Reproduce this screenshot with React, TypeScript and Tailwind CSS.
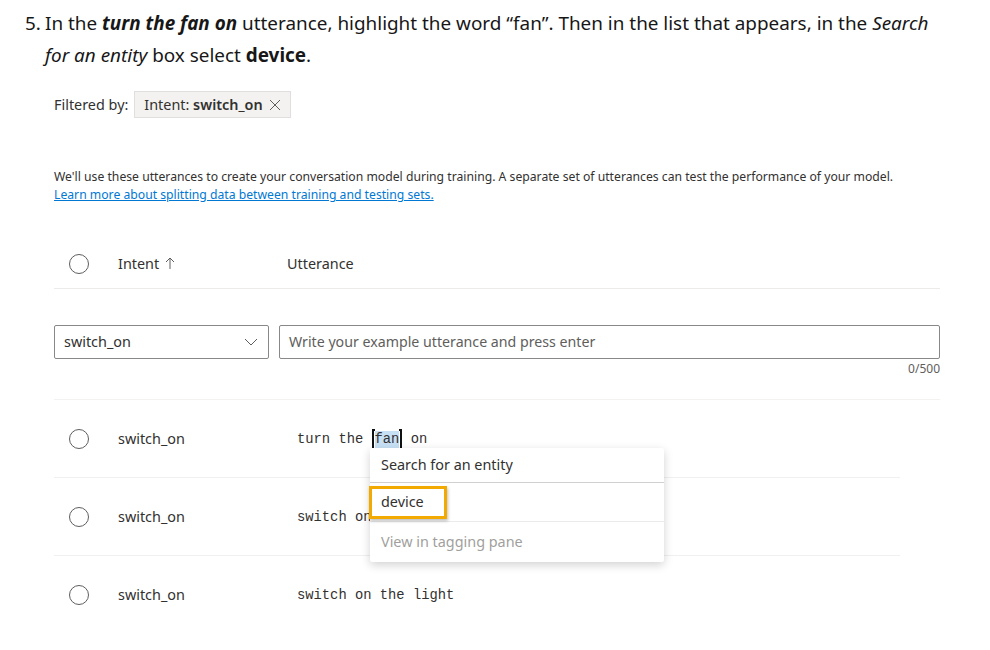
import React from "react";

const sans = { fontFamily: '"Noto Sans", "Open Sans", sans-serif' };
const mono = { fontFamily: '"Liberation Mono", "DejaVu Sans Mono", monospace' };

const Radio = () => (
  <div className="w-[20px] h-[20px] rounded-full border border-[#605e5c] shrink-0" />
);

const Row = ({ text, last }: { text: React.ReactNode; last?: boolean }) => (
  <div className={`flex items-center h-[78px] w-[846px] ${last ? "" : "border-b border-b-[#f0f0f0]"}`}>
    <div className="w-[64px] pl-[15px]">
      <Radio />
    </div>
    <div className="w-[179px] text-[14.4px] text-[#323130]">switch_on</div>
    <div className="text-[13.8px] text-[#323130] mt-[3px]" style={mono}>
      {text}
    </div>
  </div>
);

export default function App() {
  return (
    <div className="w-[990px] h-[650px] bg-white relative overflow-hidden text-[#171717]" style={sans}>
      <div className="flex pl-[25px] pt-[7px] pr-[40px] text-[18.9px] leading-[32px]">
        <span className="w-[20px] shrink-0">5.</span>
        <p>
          In the <b className="italic">turn the fan on</b> utterance, highlight the word “fan”. Then in the list that
          appears, in the <i>Search for an entity</i> box select <b>device</b>.
        </p>
      </div>

      <div className="pl-[54px]">
        <div className="flex items-center mt-[20px] h-[27px] text-[14.4px] text-[#323130]">
          <span>Filtered by:</span>
          <div className="ml-[6px] h-[27px] flex items-center px-[9px] bg-[#f3f2f1] border border-[#e1dfdd] gap-[5px]">
            <span>
              Intent: <span className="font-semibold">switch_on</span>
            </span>
            <svg width="12" height="12" viewBox="0 0 12 12" className="ml-[1px]">
              <path d="M1 1 L11 11 M11 1 L1 11" stroke="#605e5c" strokeWidth="1" />
            </svg>
          </div>
        </div>

        <div className="mt-[50px] text-[12.2px] leading-[18px] text-[#323130]">
          <p>
            We'll use these utterances to create your conversation model during training. A separate set of utterances
            can test the performance of your model.
          </p>
          <a className="text-[#0078d4] underline">Learn more about splitting data between training and testing sets.</a>
        </div>

        <div className="mt-[35px] w-[886px] h-[50px] flex items-center border-b border-b-[#edebe9] text-[14.4px] text-[#323130]">
          <div className="w-[64px] pl-[15px]">
            <Radio />
          </div>
          <div className="w-[169px] flex items-center gap-[6px]">
            Intent
            <svg width="10" height="14" viewBox="0 0 10 14">
              <path d="M5 13 V2 M1 6 L5 2 L9 6" stroke="#605e5c" fill="none" strokeWidth="1" />
            </svg>
          </div>
          <div>Utterance</div>
        </div>

        <div className="mt-[36px] flex gap-[10px] w-[886px]">
          <div className="w-[215px] h-[34px] border border-[#8a8886] rounded-[2px] flex items-center justify-between pl-[9px] pr-[10px] text-[14.4px] text-[#323130]">
            switch_on
            <svg width="14" height="8" viewBox="0 0 14 8">
              <path d="M1 1 L7 7 L13 1" stroke="#605e5c" fill="none" strokeWidth="1" />
            </svg>
          </div>
          <div className="flex-1 h-[34px] border border-[#8a8886] rounded-[2px] flex items-center pl-[9px] text-[14.2px] text-[#605e5c]">
            Write your example utterance and press enter
          </div>
        </div>
        <div className="w-[886px] text-right text-[12px] text-[#605e5c] mt-[2px] leading-[16px]">0/500</div>

        <div className="w-[886px] border-b border-b-[#f3f2f1] mt-[22px]" />

        <Row
          text={
            <span className="flex items-center">
              turn the&nbsp;
              <span className="inline-flex items-center">
                <span className="w-[3px] h-[22px] border-l-[2px] border-y-[2px] border-[#111]" />
                <span className="bg-[#c7e0f4] leading-[18px]">fan</span>
                <span className="w-[3px] h-[22px] border-r-[2px] border-y-[2px] border-[#111]" />
              </span>
              &nbsp;on
            </span>
          }
        />
        <Row text="switch on the light" />
        <Row text="switch on the light" last />
      </div>

      <div className="absolute left-[370px] top-[448px] w-[294px] bg-white rounded-[2px] shadow-[0_3px_10px_rgba(0,0,0,0.18)] text-[14.4px]">
        <div className="h-[35px] flex items-center px-[11px] text-[#323130] border-b border-b-[#d2d0ce]">
          Search for an entity
        </div>
        <div className="h-[39px] flex items-center border-b border-b-[#edebe9]">
          <div className="h-[33px] w-[78px] flex items-center pl-[9px] border-[3px] border-[#f2a900] text-[#323130] shadow-[1px_2px_3px_rgba(0,0,0,0.25)] -ml-[1px]">
            device
          </div>
        </div>
        <div className="h-[40px] flex items-center px-[11px] text-[#a19f9d]">View in tagging pane</div>
      </div>
    </div>
  );
}
